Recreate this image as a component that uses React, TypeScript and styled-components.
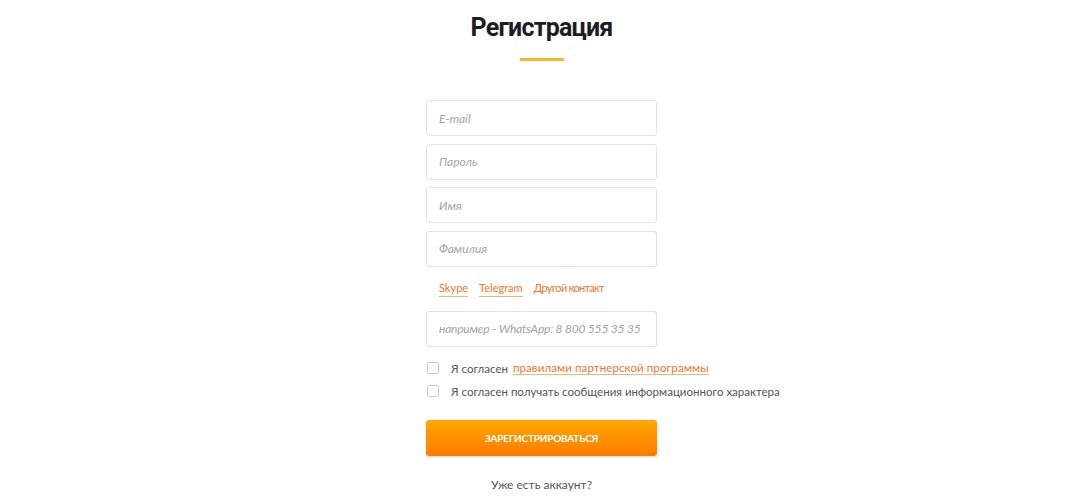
import React from "react";
import styled, { createGlobalStyle } from "styled-components";

const Global = createGlobalStyle`
  html, body { margin: 0; padding: 0; background: #fff; }
  body { font-family: Lato, "Open Sans", sans-serif; }
  * { box-sizing: border-box; }
`;

const Page = styled.div`
  display: flex;
  flex-direction: column;
  align-items: center;
  padding-top: 12px;
  padding-left: 3px;
`;

const Title = styled.h1`
  margin: 0;
  font-family: Roboto, "Open Sans", sans-serif;
  font-weight: 700;
  font-size: 25px;
  line-height: 32px;
  color: #1d1d1f;
  letter-spacing: -0.8px;
`;

const Bar = styled.div`
  width: 44px;
  height: 3px;
  background: #f5b82e;
  margin-top: 14px;
  margin-bottom: 39px;
`;

const Form = styled.form`
  width: 231px;
  display: flex;
  flex-direction: column;
`;

const Field = styled.input<{ $gap?: number; $tight?: boolean }>`
  width: 100%;
  height: 36px;
  flex: none;
  border: 1px solid #e3e3e3;
  border-radius: 3px;
  padding: 0 8px 0 12px;
  margin-bottom: ${(p) => p.$gap ?? 7.5}px;
  font-family: Lato, sans-serif;
  font-style: italic;
  font-size: 12px;
  letter-spacing: ${(p) => (p.$tight ? "-0.2px" : "0")};
  color: #333;
  outline: none;
  &::placeholder { color: #a3a3a3; }
`;

const Links = styled.div`
  display: flex;
  gap: 11px;
  padding-left: 13px;
  margin-top: 14px;
  margin-bottom: 14px;
`;

const ContactLink = styled.a<{ $active?: boolean; $tight?: boolean }>`
  font-family: Lato, sans-serif;
  font-size: 11px;
  line-height: 14px;
  color: #f0782a;
  text-decoration: none;
  padding-bottom: 1px;
  letter-spacing: ${(p) => (p.$tight ? "-0.7px" : "0")};
  border-bottom: 1px solid ${(p) => (p.$active ? "#f5b07e" : "transparent")};
`;

const Checks = styled.div`
  display: flex;
  flex-direction: column;
  gap: 8px;
  margin-top: 14px;
  width: 380px;
`;

const CheckRow = styled.label`
  display: flex;
  align-items: center;
  font-family: Lato, sans-serif;
  font-size: 11.5px;
  line-height: 15px;
  color: #555;
  white-space: nowrap;
`;

const Box = styled.span`
  width: 12px;
  height: 12px;
  border: 1px solid #cfcfcf;
  border-radius: 2px;
  margin-left: 1px;
  margin-right: 12px;
  flex: none;
`;

const RuleLink = styled.a`
  color: #f0782a;
  text-decoration: none;
  margin-left: 5px;
  border-bottom: 1px solid #f5b07e;
  line-height: 13px;
  letter-spacing: 0.1px;
`;

const Submit = styled.button`
  margin-top: 21px;
  width: 231px;
  height: 36px;
  border: none;
  border-radius: 3px;
  background: linear-gradient(to bottom, #ffa700, #ff7c00);
  color: #fff;
  font-family: Lato, sans-serif;
  font-weight: 700;
  font-size: 10px;
  text-transform: uppercase;
  letter-spacing: -0.2px;
  box-shadow: 0 1px 2px rgba(200, 90, 0, 0.25);
`;

const Login = styled.div`
  margin-top: 21px;
  font-family: Lato, sans-serif;
  font-size: 12px;
  color: #555;
`;

export default function App() {
  return (
    <>
      <Global />
      <Page>
        <Title>Регистрация</Title>
        <Bar />
        <Form onSubmit={(e) => e.preventDefault()}>
          <Field placeholder="E-mail" />
          <Field placeholder="Пароль" type="password" />
          <Field placeholder="Имя" />
          <Field placeholder="Фамилия" $gap={0} />
          <Links>
            <ContactLink $active>Skype</ContactLink>
            <ContactLink $active>Telegram</ContactLink>
            <ContactLink $tight>Другой контакт</ContactLink>
          </Links>
          <Field placeholder="например - WhatsApp: 8 800 555 35 35" $gap={0} $tight />
          <Checks>
            <CheckRow>
              <Box />
              Я согласен <RuleLink>правилами партнерской программы</RuleLink>
            </CheckRow>
            <CheckRow>
              <Box />
              Я согласен получать сообщения информационного характера
            </CheckRow>
          </Checks>
          <Submit type="submit">Зарегистрироваться</Submit>
        </Form>
        <Login>Уже есть аккаунт?</Login>
      </Page>
    </>
  );
}
